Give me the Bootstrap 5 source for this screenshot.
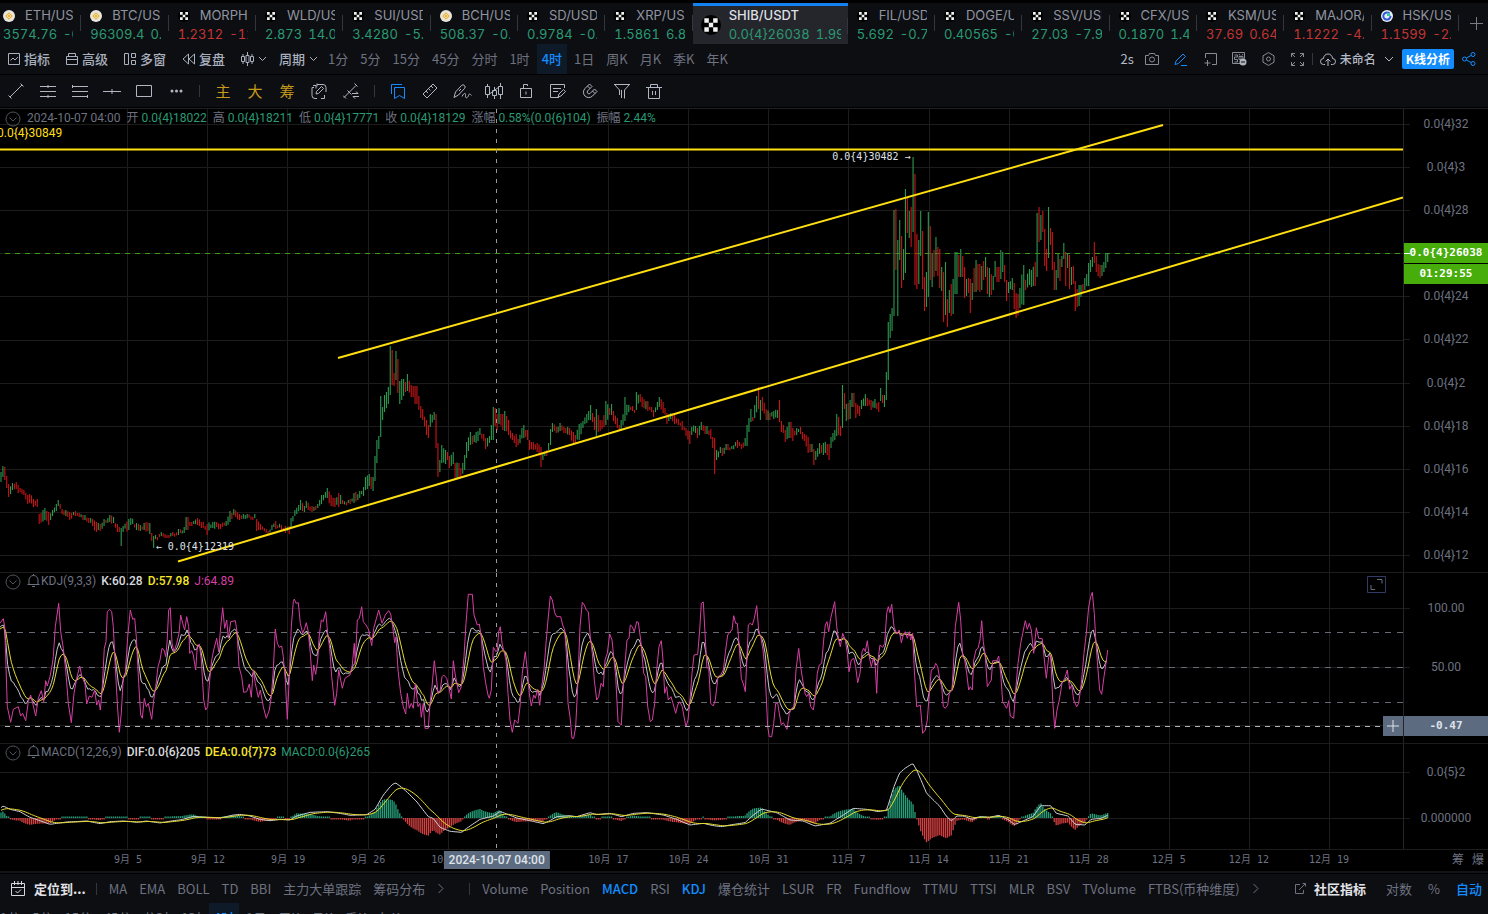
<!DOCTYPE html>
<html lang="zh-CN" data-bs-theme="dark">
<head>
<meta charset="utf-8">
<meta name="viewport" content="width=device-width, initial-scale=1">
<title>SHIB/USDT K线</title>
<link href="https://cdn.jsdelivr.net/npm/bootstrap@5.3.0/dist/css/bootstrap.min.css" rel="stylesheet">
<style>
  :root { --bar: #0d0e11; --up: #2a9a74; --down: #c23535; --dim: #6d7281; --soft: #b4bac6; --accent: #128cff; --grid: #1c1c1c; }
  body { background: var(--bar); color: var(--soft); font: 13px/20px "Noto Sans CJK SC", sans-serif; border-top: 3px solid #000; }
  button { background: none; border: 0; padding: 0; color: inherit; font: inherit; white-space: nowrap; }
  a { color: inherit; text-decoration: none; white-space: nowrap; }
  svg { display: block; flex: none; }
  .ico { fill: none; stroke: currentColor; stroke-width: 1; }
  .tickers { height: 41px; min-width: 0; font-family: Inter, sans-serif; font-variant-numeric: tabular-nums; margin-left: -6px; }
  .tick { flex: 1 1 0; min-width: 0; padding: 3px 8px 0 9px; position: relative; line-height: 19px; text-align: left; color: #8f94a0; }
  .tick::after { content: ""; position: absolute; right: 0; top: 12px; height: 16px; border-right: 1px solid #33363d; }
  .tick .clip { display: block; overflow: hidden; white-space: nowrap; }
  .tick .chg { margin-left: 6px; }
  .tick .logo { width: 12px; height: 12px; margin-right: 10px; }
  .tick.on { flex: 0 0 155px; background: #25262b; border-top: 3px solid #1283f0; padding: 0 7px 0 8px; color: #dcdfe5; }
  .up { color: var(--up); } .down { color: var(--down); }
  .addtab { width: 29px; padding-left: 6px; color: #777b86; }
  .tools { height: 30px; padding: 0 12px 0 8px; }
  .per { color: var(--dim); padding: 0 6px; line-height: 30px; }
  .per.on { color: var(--accent); background: #0e1a28; font-weight: 500; padding: 0 5px; margin: 0 1px; }
  .menu { font-weight: 500; color: #a9b0be; margin-right: 16px; gap: 4px; }
  .icob { width: 29px; color: #868b97; display: flex; justify-content: center; }
  .draw { height: 34px; border-top: 1px solid #000; border-bottom: 1px solid #000; }
  .draw button { width: 32px; display: flex; justify-content: center; color: #b0b6c2; }
  .draw .zh { color: #c79a1c; font-size: 15px; }
  .sep { width: 1px; height: 12px; background: #33363d; margin: 0 7px; flex: none; }
  .analyze { background: var(--accent); color: #fff; font-weight: 700; font-size: 12px; border-radius: 2px; padding: 0 4px; }
  .board { background: #000; border-top: 1px solid #202124; font-family: Roboto, "Noto Sans CJK SC", sans-serif; font-size: 12px; }
  .pane { border-bottom: 1px solid var(--grid); }
  .plot { flex: 1 1 0; min-width: 0; position: relative; overflow: hidden; }
  .plot > svg { width: 100%; }
  .chart-price { height: 463px; } .chart-kdj { height: 170px; } .chart-macd { height: 105px; }
  .scale { width: 85px; border-left: 1px solid #26262a; color: var(--dim); position: relative; text-align: center; flex: none; }
  .scale.prices { padding: 5px 0 7px; }
  .scale span { line-height: 20px; height: 20px; position: relative; display: block; }
  .scale span::before { content: ""; position: absolute; left: 0; top: 10px; width: 6px; border-top: 1px solid var(--grid); }
  .scale .at { position: absolute; left: 0; right: 0; margin-top: -10px; }
  .scale .flag, .scale .slate { font: bold 11px/20px "DejaVu Sans Mono", monospace; }
  .flag { background: #46ad0b; color: #fff; }
  .scale .flag::before { border-color: #fff; }
  .flag .left-time { position: absolute; left: 0; right: 0; top: 21px; height: 20px; background: #46ad0b; }
  .slate { background: #5c6b7f; color: #dfe3ea; }
  .scale .slate::before { display: none; }
  .plus { position: absolute; right: 0; width: 20px; height: 20px; margin-top: -10px; }
  .legend { position: absolute; left: 5px; top: 0; line-height: 18px; color: var(--dim); white-space: nowrap; }
  .legend.sub { top: -1px; column-gap: 5px; }
  .legend b { font-weight: 500; }
  .lbl { position: absolute; font: 10px/12px "DejaVu Sans Mono", monospace; color: #dfe2e8; margin-top: -6px; }
  .dates { font: 10px/20px "DejaVu Sans Mono", "Noto Sans CJK SC", monospace; color: var(--dim); height: 23px; border-bottom: 2px solid #131417; }
  .dates .days { padding: 0 34px 0 88px; }
  .cursor-day { position: absolute; top: 1px; transform: translateX(-50%); font: 500 12px/18px Roboto, sans-serif; padding: 0 5px; white-space: nowrap; }
  .foot { height: 30px; border-top: 1px solid #000; color: var(--dim); padding: 0 6px 0 11px; }
  .foot a { margin-right: 12px; }
  .foot a.on { color: var(--accent); font-weight: 500; }
  .foot strong { color: #e2e4e9; }
  .foot .sep { margin: 0 12px 0 10px; }
</style>
</head>
<body class="d-flex flex-column vh-100 overflow-hidden">

<nav class="d-flex flex-shrink-0">
  <div id="tickers" class="tickers d-flex flex-grow-1"></div>
  <button class="addtab flex-shrink-0 d-flex align-items-center justify-content-center" aria-label="添加"><svg class="ico" width="13" height="13"><path d="M6.500 0v13M0 6.500h13"/></svg></button>
</nav>

<div class="tools d-flex align-items-center flex-shrink-0">
  <button class="menu d-flex align-items-center"><svg class="ico" width="12" height="12"><path d="M.5.5h11v11H.5zM2.500 7.500 5 5l2 2 3-3"/></svg>指标</button>
  <button class="menu d-flex align-items-center"><svg class="ico" width="12" height="12"><path d="M.5 3.500h11v8H.5zM.5 6.500h11M2.500 3V.5h7V3"/></svg>高级</button>
  <button class="menu d-flex align-items-center"><svg class="ico" width="12" height="12"><path d="M.5.5h4v11h-4zM7.500.5h4v4h-4zM7.500 7.500h4v4h-4z"/></svg>多窗</button>
  <button class="menu d-flex align-items-center"><svg class="ico" width="13" height="12"><path d="M6.500 1v10L1 6zM12.500 1v10L7 6z"/></svg>复盘</button>
  <button class="menu d-flex align-items-center me-2" aria-label="图表类型"><svg class="ico" width="13" height="14"><path d="M2 2v10M6.500 0v14M11 2v10"/><path fill="#0d0e11" d="M.5 4.500h3v5h-3zM5 3.500h3v7H5zM9.500 4.500h3v5h-3z"/></svg><svg class="ico" width="9" height="6"><path d="m1 1 3.500 3.500L8 1"/></svg></button>
  <button class="menu d-flex align-items-center me-1 ps-1">周期<svg class="ico" width="9" height="6"><path d="m1 1 3.500 3.500L8 1"/></svg></button>
  <div class="d-flex">
    <button class="per">1分</button><button class="per">5分</button><button class="per">15分</button><button class="per">45分</button><button class="per">分时</button><button class="per">1时</button><button class="per on">4时</button><button class="per">1日</button><button class="per">周K</button><button class="per">月K</button><button class="per">季K</button><button class="per">年K</button>
  </div>
  <div class="d-flex align-items-center ms-auto">
    <button class="me-1">2s</button>
    <button class="icob" aria-label="截图"><svg class="ico" width="14" height="12"><path d="M.5 2.500h3l1-2h5l1 2h3v9H.5z"/><circle cx="7" cy="6.500" r="2.500"/></svg></button>
    <button class="icob" aria-label="画图" style="color:#128cff"><svg class="ico" width="14" height="13"><path d="m2 8 7-7 2.500 2.500-7 7L1 11.500zM7 12.500h6"/></svg></button>
    <button class="icob" aria-label="新窗口"><svg class="ico" width="13" height="13"><path d="M1.500 5V.5h11v11H8M3.500 7v6M.5 10h6"/></svg></button>
    <button class="icob" aria-label="弹幕"><svg class="ico" width="15" height="14"><path d="M8 11.500H.5V.5h12v6M2.500 3h3v2h-3v2.500h3V10h-3M7 2l1 1.500M11 2l-1 1.500M7 4.500h4v3H7zM9 4v6"/><circle cx="11" cy="10" r="3.500" fill="#aeb3be" stroke="none"/><path stroke="#0d0e11" d="M9 10h4"/></svg></button>
    <button class="icob" aria-label="设置"><svg class="ico" width="13" height="14"><path d="m6.500.6 5.500 3.200v6.400l-5.500 3.200L1 10.200V3.800z"/><circle cx="6.500" cy="7" r="2"/></svg></button>
    <button class="icob" aria-label="全屏"><svg class="ico" width="13" height="13"><path d="M.5 4V.5H4M.5.5 4 4M9 .5h3.500V4M12.500.5 9 4M.5 9v3.500H4M.5 12.500 4 9M12.500 9v3.500H9M12.500 12.500 9 9"/></svg></button>
    <span class="sep ms-0"></span>
    <button class="d-flex align-items-center gap-1 fw-medium" style="font-size:12px"><svg class="ico" width="16" height="13"><path d="M5 11.500H3.500a3 3 0 0 1 0-6 4.500 4.500 0 0 1 9 0 3 3 0 0 1 0 6H11M8 13V6M5.500 8.500 8 6l2.500 2.500"/></svg>未命名<svg class="ico ms-1" width="10" height="6"><path d="m1 1 4 4 4-4"/></svg></button>
    <button class="analyze ms-2 me-2">K线分析</button>
    <button aria-label="分享" style="color:#128cff"><svg class="ico" width="14" height="14"><circle cx="2.500" cy="7" r="2"/><circle cx="11" cy="2.500" r="2"/><circle cx="11" cy="11.500" r="2"/><path d="m4.300 6 5-2.600M4.300 8l5 2.600"/></svg></button>
  </div>
</div>

<div class="draw d-flex align-items-center flex-shrink-0">
  <button aria-label="线段"><svg class="ico" width="16" height="16"><path d="m2 14 12-12M.5 12.500l3 3M12.500.5l3 3"/></svg></button>
  <button aria-label="平行线"><svg class="ico" width="16" height="14"><path d="M0 2.500h16M0 7.500h16M0 12.500h16M8 1v3M8 11v3"/></svg></button>
  <button aria-label="通道"><svg class="ico" width="16" height="14"><path d="M0 2.500h16M0 7.500h16M0 12.500h16M.5 1v3M15.500 11v3"/></svg></button>
  <button aria-label="水平线"><svg class="ico" width="18" height="8"><path d="M0 4.500h18M9 2v5"/></svg></button>
  <button aria-label="矩形"><svg class="ico" width="16" height="12"><path d="M.5.5h15v11H.5z"/></svg></button>
  <button aria-label="更多"><svg width="13" height="4" fill="currentColor"><circle cx="2" cy="2" r="1.500"/><circle cx="6.500" cy="2" r="1.500"/><circle cx="11" cy="2" r="1.500"/></svg></button>
  <span class="sep"></span>
  <button class="zh">主</button><button class="zh">大</button><button class="zh">筹</button>
  <button aria-label="替换"><svg class="ico" width="16" height="17"><path d="M6 15.500H4a3 3 0 0 1-3-3V4.500h2M2 2.500h3v3M6 1.500h6a3 3 0 0 1 3 3V9M10 15.500h3.500V12M6 .5v3M5 11l.5-2.500 5-5 2 2-5 5z"/></svg></button>
  <button aria-label="线条切换"><svg class="ico" width="16" height="16"><path d="m1 14.500 12-12M11.500.5l3 3M0 12.500l3 3M4.500 7.500l4 4M9 10.500h6l-2-2M16 13.500h-6l2 2"/></svg></button>
  <span class="sep"></span>
  <button aria-label="书签"><svg class="ico" width="16" height="16" style="color:#128cff"><path d="M1.500 11V1.500H12M4.500 4.500h10v11l-5-3-5 3z"/></svg></button>
  <button aria-label="尺子"><svg class="ico" width="16" height="16"><path d="m1 11 10-10 4 4L5 15zM4 8l2 2M6.500 5.500l2 2M9 3l2 2"/></svg></button>
  <button aria-label="画笔"><svg class="ico" width="19" height="15"><path d="m1 13.500 1.500-5.500 6-6.500a2 2 0 0 1 3 3l-6 6.500zM6 7l2-2M9 12.500c2-4 4-4 3.500-1s2 3 3 0 2-1 3 0"/></svg></button>
  <button aria-label="形态"><svg class="ico" width="18" height="17"><path d="M2.500 1v2M2.500 12v3M9.500 4v3M9.500 12v4M15.500 0v3M15.500 12v4M.5 3.500h4v8h-4zM7.500 7.500h4v5h-4zM13.500 3.500h4v8h-4zM3 12l11-8"/></svg></button>
  <button aria-label="锁"><svg class="ico" width="12" height="15"><path d="M.5 4.500h11v9H.5zM3.500 4.500v-4h4V2M6 7.500v3"/></svg></button>
  <button aria-label="备注"><svg class="ico" width="16" height="15"><path d="M9 13.500H.5V.5h14V4M3 4.500h8M3 7.500h5M8 13l1-3 4.500-4.500 2 2L11 12z"/></svg></button>
  <button aria-label="磁铁"><svg class="ico" width="16" height="16"><path d="M7.500 1 3 5.500a5.300 5.300 0 0 0 7.500 7.500L15 8.500 12.500 6 8 10.500a1.800 1.800 0 0 1-2.500-2.500L10 3.500zM5.500 3 8 5.500M10.500 8l2.500 2.500"/></svg></button>
  <button aria-label="筛选"><svg class="ico" width="16" height="15"><path d="M.5.500h15L10.500 6v8.500M5.500 11V6L.5.500M0 .5h16M7.500 6v8"/></svg></button>
  <button aria-label="删除"><svg class="ico" width="16" height="15"><path d="M0 3.500h16M4.500 3.500v-3h7v3M2.500 3.500v11h11v-11M6.500 7v4M9.500 7v4"/></svg></button>
</div>

<main class="board flex-shrink-0">
  <section class="pane d-flex">
    <div class="plot">
      <svg class="chart-price" id="price" viewBox="0 109 1403 463" preserveAspectRatio="none"></svg>
      <div class="legend d-flex align-items-center" style="column-gap:6px">
        <svg class="ico" width="16" height="17" style="color:#50535c"><circle cx="8" cy="9" r="7"/><path d="m4.500 7.500 3.500 3.500 3.500-3.500"/></svg>
        <span>2024-10-07 04:00</span><span>开 <span class="up">0.0{4}18022</span></span><span>高 <span class="up">0.0{4}18211</span></span><span>低 <span class="up">0.0{4}17771</span></span><span>收 <span class="up">0.0{4}18129</span></span><span>涨幅 <span class="up">0.58%(0.0{6}104)</span></span><span>振幅 <span class="up">2.44%</span></span>
      </div>
      <div class="legend" style="left:-3px;top:15px;color:#ffdf10">0.0{4}30849</div>
      <div class="lbl" style="right:35.1%;top:10.4%">0.0{4}30482 →</div>
      <div class="lbl" style="left:11.1%;top:94.6%">← 0.0{4}12319</div>
    </div>
    <div class="scale prices d-flex flex-column justify-content-between">
      <span>0.0{4}32</span><span>0.0{4}3</span><span>0.0{4}28</span>
      <span class="flag">0.0{4}26038<i class="left-time fst-normal">01:29:55</i></span>
      <span>0.0{4}24</span><span>0.0{4}22</span><span>0.0{4}2</span><span>0.0{4}18</span><span>0.0{4}16</span><span>0.0{4}14</span><span>0.0{4}12</span>
    </div>
  </section>

  <section class="pane d-flex">
    <div class="plot">
      <svg class="chart-kdj" id="kdj" viewBox="0 573 1403 170" preserveAspectRatio="none"></svg>
      <div class="legend sub d-flex align-items-center">
        <svg class="ico" width="17" height="17" style="color:#50535c"><circle cx="8" cy="9" r="7"/><path d="m4.500 7.500 3.500 3.500 3.500-3.500"/></svg>
        <span class="d-flex align-items-center"><svg class="ico" width="14" height="14"><path d="M.5 10.500h12M2 10.500V6a4.500 4.500 0 0 1 9 0v4.500M5 12.500h3M6.500 0v1.500"/></svg>KDJ(9,3,3)</span><b style="color:#d8dade">K:60.28</b><b style="color:#f5e72a">D:57.98</b><span style="color:#d63fa4">J:64.89</span>
      </div>
      <svg class="position-absolute" style="right:16px;top:3px;width:20px" width="20" height="18" fill="none" stroke="#343a66"><path d="M.5.5h18v16H.5z"/><path stroke="#6a6d78" d="M10 3.500h5v4M4 9v4.500h4"/></svg>
      <button class="plus slate d-flex align-items-center justify-content-center" style="top:90%" aria-label="添加警报"><svg class="ico" width="12" height="12"><path d="M6 0v12M0 6h12"/></svg></button>
    </div>
    <div class="scale"><span class="at" style="top:20.6%">100.00</span><span class="at" style="top:55.3%">50.00</span><span class="at slate" style="top:90%">-0.47</span></div>
  </section>

  <section class="pane d-flex">
    <div class="plot">
      <svg class="chart-macd" id="macd" viewBox="0 744 1403 105" preserveAspectRatio="none"></svg>
      <div class="legend sub d-flex align-items-center">
        <svg class="ico" width="17" height="17" style="color:#50535c"><circle cx="8" cy="9" r="7"/><path d="m4.500 7.500 3.500 3.500 3.500-3.500"/></svg>
        <span class="d-flex align-items-center"><svg class="ico" width="14" height="14"><path d="M.5 10.500h12M2 10.500V6a4.500 4.500 0 0 1 9 0v4.500M5 12.500h3M6.500 0v1.500"/></svg>MACD(12,26,9)</span><b style="color:#d8dade">DIF:0.0{6}205</b><b style="color:#f5e72a">DEA:0.0{7}73</b><span class="up">MACD:0.0{6}265</span>
      </div>
    </div>
    <div class="scale"><span class="at" style="top:26.7%">0.0{5}2</span><span class="at" style="top:70.5%">0.000000</span></div>
  </section>

  <div class="dates d-flex">
    <div class="flex-grow-1 position-relative">
      <div id="days" class="days d-flex text-center"></div>
      <div class="cursor-day slate" style="left:35.4%">2024-10-07 04:00</div>
    </div>
    <div style="width:85px;font-size:12px" class="text-end pe-1 flex-shrink-0"><span class="me-2">筹</span>爆</div>
  </div>
</main>

<div class="foot d-flex align-items-center flex-shrink-0">
  <button class="d-flex align-items-center gap-2"><svg class="ico" width="15" height="16" style="color:#d5d8de"><path d="M.5 2.500h13v12H.5zM.5 6.500h13M3.500 0v4M7 0v4M10.500 0v4M4.500 10l2 2 3.500-3.500"/></svg><strong>定位到...</strong></button>
  <span class="sep"></span>
  <a href="#">MA</a><a href="#">EMA</a><a href="#">BOLL</a><a href="#">TD</a><a href="#">BBI</a><a href="#">主力大单跟踪</a><a href="#">筹码分布</a>
  <button aria-label="更多主图指标"><svg class="ico" width="8" height="11"><path d="m1.500 1 4.500 4.500L1.500 10"/></svg></button>
  <span class="sep ms-4"></span>
  <a href="#">Volume</a><a href="#">Position</a><a href="#" class="on">MACD</a><a href="#">RSI</a><a href="#" class="on">KDJ</a><a href="#">爆仓统计</a><a href="#">LSUR</a><a href="#">FR</a><a href="#">Fundflow</a><a href="#">TTMU</a><a href="#">TTSI</a><a href="#">MLR</a><a href="#">BSV</a><a href="#">TVolume</a><a href="#">FTBS(币种维度)</a>
  <button aria-label="更多副图指标"><svg class="ico" width="8" height="11"><path d="m1.500 1 4.500 4.500L1.500 10"/></svg></button>
  <button class="d-flex align-items-center gap-2 ms-auto"><svg class="ico" width="12" height="12"><path d="M6 1.500H1.500v9h8V7M5 7l6-6M8.500.5h3v3"/></svg><strong>社区指标</strong></button>
  <button class="ms-3 ps-1">对数</button><button class="ms-3">%</button><button class="ms-3 fw-medium" style="color:#128cff">自动</button>
</div>
<div class="tools d-flex flex-shrink-0 p-0" style="margin-left:-6px">
  <button class="per">1分</button><button class="per">5分</button><button class="per">15分</button><button class="per">45分</button><button class="per">分时</button><button class="per">1时</button><button class="per on">4时</button><button class="per">1日</button><button class="per">周K</button><button class="per">月K</button><button class="per">季K</button><button class="per">年K</button>
</div>

<script src="https://cdn.jsdelivr.net/npm/bootstrap@5.3.0/dist/js/bootstrap.bundle.min.js"></script>
<script>
// ---- ticker tabs: name, price, change, colour, logo ----
const tabs = [
  ['ETH/USDT','3574.76','-0.52','up','bnb'],['BTC/USDT','96309.4','0.41','up','bnb'],['MORPHO/USDT','1.2312','-12.1','down','okx'],
  ['WLD/USDT','2.873','14.05','up','okx'],['SUI/USDT','3.4280','-5.21','up','okx'],['BCH/USDT','508.37','-0.21','up','bnb'],
  ['SD/USDT','0.9784','-0.41','up','okx'],['XRP/USDT','1.5861','6.82','up','okx'],['SHIB/USDT','0.0{4}26038','1.99','up','okx'],
  ['FIL/USDT','5.692','-0.78','up','okx'],['DOGE/USDT','0.40565','-0.21','up','okx'],['SSV/USDT','27.03','-7.90','up','okx'],
  ['CFX/USDT','0.1870','1.41','up','okx'],['KSM/USDT','37.69','0.641','down','okx'],['MAJOR/USDT','1.1222','-4.11','down','okx'],['HSK/USDT','1.1599','-2.61','down','hsk']];
const logos = {
  bnb: s => `<svg class="logo" width="${s}" height="${s}" viewBox="0 0 12 12"><circle cx="6" cy="6" r="6" fill="#e9e6df"/><path d="M6 2.200 9.800 6 6 9.800 2.200 6z" fill="#eeb32b"/><path d="M6 4 8 6 6 8 4 6z" fill="none" stroke="#e9e6df" stroke-width=".8"/></svg>`,
  okx: s => `<svg class="logo" width="${s}" height="${s}" viewBox="0 0 12 12"><circle cx="6" cy="6" r="6" fill="#000"/><path fill="#f2f2f2" d="M2 2h2.700v2.700H2zM7.300 2H10v2.700H7.300zM4.700 4.700h2.600v2.600H4.700zM2 7.300h2.700V10H2zM7.300 7.300H10V10H7.300z"/></svg>`,
  hsk: s => `<svg class="logo" width="${s}" height="${s}" viewBox="0 0 12 12"><circle cx="6" cy="6" r="6" fill="#e9eefb"/><path d="M8.500 3.500A3.600 3.600 0 1 0 9.500 6" fill="none" stroke="#2f55d8" stroke-width="2"/><path d="M6 2.500A3.500 3.500 0 0 1 9.500 6H6z" fill="#39c6a8"/></svg>` };
const quote = (p, c, k) => `<span class="clip ${k}">${p}<span class="chg">${c}</span></span>`;
document.getElementById('tickers').innerHTML = tabs.map(([n, p, c, k, l]) => n === 'SHIB/USDT'
  ? `<button class="tick on d-flex align-items-center">${logos[l](20).replace('class="logo"', 'class="me-2"')}<span class="clip"><span class="clip fw-medium">${n}</span>${quote(p, c, k)}</span></button>`
  : `<button class="tick"><span class="clip"><span class="d-flex align-items-center">${logos[l](12)}${n}</span></span>${quote(p, c, k)}</button>`).join('');

document.getElementById('days').innerHTML = ['9月 5','9月 12','9月 19','9月 26','10月 3','10月 10','10月 17','10月 24','10月 31','11月 7','11月 14','11月 21','11月 28','12月 5','12月 12','12月 19']
  .map(d => `<span class="text-nowrap" style="flex:1 1 0">${d}</span>`).join('');

// ---- shared helpers ----
const STEP = 80.14 / 42;             // width of one 4h bar
const COUNT = 581;
const W = 1403;
const line = (x1, y1, x2, y2, c, more = '') => `<line x1="${x1}" y1="${y1}" x2="${x2}" y2="${y2}" stroke="${c}" ${more}/>`;
const grid = (top, bottom, ys) => {
  let s = '';
  for (let i = 0; i < 16; i++) { const x = Math.floor(127.6 + i * 80.14) + .5; s += line(x, top, x, bottom, '#1c1c1c'); }
  ys.forEach(y => s += line(0, y + .5, W, y + .5, '#1c1c1c'));
  return s;
};
const crosshair = (top, bottom) => line(496.5, top, 496.5, bottom, '#999', 'stroke-dasharray="4 6"');
const at = (pts, x, k) => {
  let i = 1;
  while (i < pts.length - 1 && pts[i][0] < x) i++;
  const a = pts[i - 1], b = pts[i], t = Math.max(0, Math.min(1, (x - a[0]) / (b[0] - a[0] || 1)));
  return a[k] + (b[k] - a[k]) * t;
};

// ---- price bars: x, high, low, optional colour ----
const bars = `0 472 482;3 466 477 g;5 467 480 r;7 476 488 r;9 484 497 r;13 483 490;16 482 489;19 485 493;23 490 495;27 495 504;30 494 503;34 499 507;38 499 507;40 514 524 r;44 508 520;48 512 525;52 510 516;56 504 511;59 500 506;62 509 514;66 510 516;70 512 520;75 511 516;80 513 517;84 515 520;88 518 523;92 519 526;96 522 532 r;100 524 531;104 519 526;109 515 522;113 517 523;117 524 532;119 527 532;121 528 546 g;123 526 532;128 519 530;131 518 525;136 523 530;141 525 531;145 523 530;149 523 534;152 533 541;154 536 548 g;156 535 539;162 532 536;166 534 538;172 532 536;178 529 535;184 527 533;187 517 530;191 522 526;198 518 525;202 522 528;207 524 535;213 522 528;220 524 529;226 521 526;230 511 522;234 509 515;239 514 520;246 515 519;254 514 518;257 519 531 r;261 524 530;267 529 533;272 525 530;276 521 529;281 525 530;286 526 533;289 526 534;291 518 528;295 510 516;300 500 510;304 506 512;307 501 508;312 506 512;317 504 508;321 495 504;327 488 498;331 495 506;335 498 507;339 493 507;343 500 504;350 499 504;354 493 503;359 491 498;363 487 496;366 477 490 g;369 474 486 g;373 477 491 g;375 456 481 g;377 440 463 g;379 436 449 g;381 396 437 g;383 407 420 g;385 395 412 g;388 387 404 g;390 346 395 g;392 350 385 r;394 373 386 r;396 351 380 g;398 359 393 r;400 381 404 g;403 379 396;406 382 392;408 374 391 g;411 385 397;414 386 397;416 386 404;418 396 410 r;420 406 418 r;423 409 420;426 420 435 r;429 425 438;431 414 427;434 412 420;436 414 448 r;438 443 477 r;440 460 472 g;442 445 463 g;445 450 464;448 452 460 r;450 456 468;453 452 464;456 463 478 r;459 463 479 r;461 468 477;464 455 470 g;467 442 458 g;470 432 445 g;474 435 442;477 432 443;480 428 435;483 434 441;486 438 449;490 436 443;493 407 440 g;495 408 426 r;497 414 430;499 408 424 g;502 414 430;505 411 431;508 420 435 r;512 433 440;516 434 447 r;519 439 445;523 425 438 g;527 430 440;530 440 450;534 442 450;538 443 452;541 447 467 r;543 454 460;546 450 456;549 443 450 g;551 429 445 g;553 423 432;557 427 433;560 423 431;564 427 433;570 428 435;573 432 445;576 435 443;579 424 440 g;583 421 428;587 414 423;590 405 420;592 413 422;595 417 430 r;597 409 436 g;600 420 431;604 415 427 r;606 401 425 g;609 408 415;612 404 415;614 411 421;617 418 428 r;620 425 431;622 420 430;625 397 421 g;628 405 412;632 406 411;635 410 412;637 392 410 g;640 394 402 r;643 397 407;647 401 411;651 407 412;654 410 417;657 402 410;660 397 407;664 402 413 r;667 413 424;671 413 419;674 415 424;678 419 425;682 421 430 r;686 428 436 r;689 431 444 r;692 427 435;695 426 433;698 428 438;702 422 430 g;706 426 434;710 429 439 r;712.5 437 448 r;714.5 438 474 r;717 450 460 g;720 447 453;723 448 456;727 444 450;731 446 449;737 440 448;741 444 449;745 438 446;747 425 446 g;749 418 432 g;751 409 422;753 417 421;755 405 418 g;758 387 409 r;760 400 420 g;763 397 411 r;766 409 420 r;770 413 420;773 411 419 g;777 410 418;779 400 422 r;782 421 432 r;786 430 442;790 422 438;793 428 441;796 428 435;800 427 434;804 434 441;808 437 453 r;811 444 452;813 449 465 r;816 451 460 g;819 443 454;823 443 455;826 442 453;829 444 460 r;831 437 448 g;834 430 440 g;836 414 436 g;838 417 435 r;840 426 436;842 385 428 g;844 393 409 r;847 404 421 g;850 400 419 g;853 393 407;856 403 418 r;859 406 416;862 400 409 g;865 394 406;868 398 406;871 400 410 r;875 399 408;878 402 412;880 388 401 g;883 395 403 r;885 395 407 g;887 372 400 g;888 322 380 g;890 314 338 g;892 308 331 g;894 210 316 g;896 209 270 r;898 240 316 g;900 220 260 g;902 236 288 r;904 249 280 g;906 189 273 g;908 198 233 r;909.5 211 238 g;911 207 247 r;913 157 232 g;915 174 285 r;917 234 289 r;919 240 284 g;921 211 256 g;923 231 289 r;925 277 311 r;927 272 307 g;929 212 297 g;931 226 280 r;933 253 287 g;935 250 277 r;936.5 237 271 g;938 247 276 r;940 249 288 r;942 267 291 g;944 272 322 r;946 262 315 g;948 299 327 r;950 290 313 g;952 284 316 r;954 279 314 g;956 252 294 g;958 255 277 r;960 249 277 g;962 256 277 r;964 267 298 r;966 279 296 g;968 278 293 r;970 279 313 r;972 283 300 g;974 268 292 r;976 260 292 g;978 264 290 r;980 264 292 r;982 266 290 g;984 261 280 r;986 257 277 g;988 267 294 r;990 268 297 g;993 276 290 g;996 261 277 g;998 267 282 r;1000 250 279 g;1002 252 272 g;1004 265 282 r;1006 280 301 r;1009 282 293;1012 278 290 g;1014 283 309 r;1017 293 318 r;1020 288 308 g;1023 265 305 g;1025 280 290 r;1029 269 285;1032 270 287 g;1035 262 286 r;1036.7 213 277 g;1038.7 207 242 r;1040.7 215 240 g;1042.7 211 232 r;1044.7 229 266 r;1046.3 249 271 r;1048.3 207 258 g;1050.3 228 245 r;1052.3 232 270 r;1054 262 290 r;1056 270 290 g;1058 254 278 g;1060 259 281 r;1062 256 267 g;1064 243 259 g;1066 252 286 r;1067.5 253 268 g;1069 255 289 r;1071 267 285 g;1073 266 284 r;1075 281 311 r;1077 289 307 r;1078.5 285 306 g;1080 285 297 g;1082 284 292 r;1084 278 290 g;1087 274 286 g;1089 263 286 g;1091 260 272 g;1092.5 257 267 g;1094 242 263 r;1096 256 272 r;1098 264 276 r;1100 265 278 r;1102 265 276 g;1104 262 272 g;1106 253 268 g;1108 253 262 g`
  .split(';').map(r => { const p = r.split(' '); return [+p[0], +p[1], +p[2], p[3]]; });

let s = grid(109, 572, [124, 167, 210, 253, 296, 340, 383, 426, 469, 512, 555]);
s += line(5, 253.5, W, 253.5, '#3f9a12', 'stroke-dasharray="5 5"');
let seed = 7, prev = 477;
const rnd = () => (seed = (seed * 16807) % 2147483647) / 2147483647;
for (let i = 0; i < COUNT; i++) {
  const x = 1 + i * STEP;
  if (x > 1109) break;
  const key = bars.reduce((b, q) => Math.abs(q[0] - x) < Math.abs(b[0] - x) ? q : b);
  let hi, lo, c;
  if (Math.abs(key[0] - x) <= 1) [, hi, lo, c] = key;
  else { hi = at(bars, x, 1) + rnd() * 4 - 1; lo = at(bars, x, 2) - rnd() * 4 + 1; }
  const mid = (hi + lo) / 2;
  if (!c) c = mid - prev + (rnd() - .5) * 4 > 0 ? 'r' : 'g';
  prev = mid;
  s += line(x.toFixed(2), hi.toFixed(1), x.toFixed(2), Math.max(lo, hi + 3).toFixed(1), c === 'g' ? '#2c9a50' : '#c81616', 'stroke-width="1.1"');
}
s += line(0, 149.5, W, 149.5, '#ffdf10', 'stroke-width="2"') + line(338, 358, 1163, 125, '#ffdf10', 'stroke-width="2"') + line(178, 561.5, W, 197.5, '#ffdf10', 'stroke-width="2"');
s += crosshair(109, 572);
document.getElementById('price').innerHTML = s;

// ---- indicator samples, stored in thirds of a pixel, origin y = 560 ----
const unpack = groups => groups.flatMap(([x0, str]) => str.split(' ').map(p => { const [x, y] = p.split(','); return [(+x + x0) / 3, 560 + y / 3]; }));
const jLine = unpack([
 [0, '0,190 10,176 14,200 22,440 32,487 40,448 55,440 62,468 68,460 77,482 85,425 92,405 107,468 115,415 124,392 131,425 137,362 142,378 150,350 156,318 160,290 166,200 176,130 182,215 190,265 197,330 205,430 214,488 222,400 230,355 239,318 246,350 255,372 260,432 268,408 276,412 284,390 290,435 296,420 301,450 306,395 313,265 318,245 322,155 329,148 335,155 340,200 346,320 352,430 358,517 364,460 370,350 376,340 383,230 391,150 398,178 404,175 409,230 416,370 422,465 427,475 433,415 439,440 445,430 455,478 461,420 467,380 474,320 480,300 486,265 492,270 497,290 501,250 506,150 511,143 516,250 522,275 530,250 537,220 542,165 548,190 554,210 560,170 566,200 569,280 575,272 580,285 587,330 592,260 598,252 604,300 611,420 617,450 623,440 629,360 635,300 641,270 650,235 656,275 662,200 668,143 674,205 680,180 685,235 692,185 706,182 711,215 717,320 725,350 731,397 740,395 748,372 754,412 760,330 766,370 775,412 781,390 790,440 799,475 808,450 814,410 820,330 826,207 832,250 838,262 845,258 850,290 856,360 862,478 868,350 874,200 880,125 883,117 888,130 895,128 901,190 908,220 914,205 919,188 925,215 931,280 937,362 941,315 947,343 953,300 958,225 964,180 970,185 977,155 983,220 989,265 995,350 1004,436 1010,400 1016,330 1027,385 1035,355 1050,345 1057,315 1063,250 1066,310 1072,180 1078,175 1085,140 1090,185 1098,195 1106,210 1115,257 1121,205 1128,180 1136,150 1146,190 1156,165 1166,152 1172,162 1178,200 1184,248 1188,230 1194,330 1202,400 1210,440 1217,462 1222,400 1228,445 1234,430 1240,445 1246,372 1254,440 1260,430 1264,472 1270,430 1275,505 1285,505 1290,430 1296,380 1303,302 1309,350 1314,400 1320,395 1326,350 1331,345 1340,355 1347,385 1354,417 1360,302 1366,345 1376,398 1384,380 1392,290 1398,190 1405,103 1417,103 1422,165 1432,195 1438,192 1444,230 1450,320 1457,370 1464,405 1468,415 1474,390'],
 [1470, '10,262 18,275 22,270 26,215 31,200 36,250 42,275 48,300 54,400 60,480 67,517 74,480 84,490 90,440 97,340 106,275 112,330 118,400 124,438 131,405 136,415 143,388 149,436 155,380 162,330 168,250 174,180 181,108 187,120 194,158 200,170 212,170 218,195 224,210 229,280 234,430 240,470 246,535 251,535 257,500 263,380 270,200 277,127 283,135 289,150 295,155 301,230 307,280 313,360 320,420 326,410 333,370 340,380 345,300 352,280 359,222 366,240 371,290 377,350 384,485 394,495 400,380 405,310 411,240 417,235 421,195 427,200 433,215 440,185 445,187 452,240 461,340 467,350 473,440 481,485 487,480 494,430 500,330 507,260 514,242 519,300 524,400 530,380 535,420 543,410 549,430 557,460 563,435 569,425 577,440 582,470 588,500 594,480 600,420 606,340 612,285 623,283 629,210 634,130 640,126 645,220 651,325 656,320 662,430 670,438 676,420 684,350 692,345 700,330 707,270 713,225 720,215 726,210 731,167 737,190 742,190 748,260 754,355 761,375 766,395 771,290 775,195 781,190 787,195 793,175 800,137 806,210 813,235 819,270 825,330 833,500 838,530 845,530 851,490 857,430 863,430 868,460 874,495 880,488 891,508 898,460 905,445 912,440 918,330 926,265 932,320 938,360 945,400 950,410 956,400 962,440 970,450 977,400 982,340 988,315 995,310 1001,240 1006,195 1011,185 1016,215 1022,175 1034,125 1040,200 1046,240 1051,260 1058,220 1066,240 1072,280 1077,335 1084,300 1091,295 1097,320 1103,368 1110,340 1116,275 1121,265 1126,275 1132,242 1138,290 1144,320 1150,295 1156,320 1160,400 1164,300 1170,255 1178,262 1184,250 1190,160 1195,140 1200,158 1205,133 1212,200 1220,222 1228,210 1234,248 1240,225 1246,215 1252,235 1258,215 1262,240 1268,220 1273,330 1280,440 1291,435 1298,520 1306,510 1312,480 1318,400 1324,330 1332,325 1337,310 1343,320 1350,360 1355,380 1360,440 1366,445 1373,435 1378,400 1386,390 1391,300 1396,200 1406,127 1412,180 1418,290 1424,300 1430,340 1436,390 1441,380 1447,390 1451,300 1458,270 1464,265 1470,240 1475,182 1480,245 1486,290 1492,380 1498,370'],
 [2964, '10,360 14,302 26,302 32,288 38,340 44,425 56,445 62,422 67,468 77,475 83,390 90,310 98,250 104,220 112,182 118,208 124,190 130,210 137,280 145,203 152,235 163,236 168,290 175,355 182,290 188,285 194,420 200,505 207,450 214,420 222,370 230,355 238,330 245,388 251,375 257,420 266,440 272,430 280,370 288,280 295,220 302,140 308,110 313,97 319,160 324,250 330,330 335,390 341,403 348,350 354,310 359,270']]);
const poly = (p, c) => `<polyline fill="none" stroke="${c}" points="${p.map(q => q[0].toFixed(1) + ',' + q[1].toFixed(1)).join(' ')}"/>`;

s = grid(573, 743, [608, 667, 725]);
[632.5, 667.5, 702.5].forEach(y => s += line(5, y, W, y, '#666a72', 'stroke-dasharray="6 6"'));
// D follows from J, and K from both, since J = 3K - 2D
let d = 630; const K = [], D = [];
for (let x = 0; x <= 1107.6; x += STEP) { const j = at(jLine, x, 1); d = (6 * d + j) / 7; D.push([x, d]); K.push([x, (j + 2 * d) / 3]); }
s += poly(K, '#c4c6ca') + poly(D, '#e8dc2e') + poly(jLine, '#d63fa4');
s += line(5, 726.5, 1383, 726.5, '#b0b2b8', 'stroke-dasharray="5 5"') + crosshair(573, 743);
document.getElementById('kdj').innerHTML = s;

const dif = unpack([
 [0, '0,745 10,738 30,748 60,755 90,772 120,782 150,793 200,786 260,783 300,791 330,785 370,783 410,787 440,783 480,789 520,782 545,779 580,769 620,772 660,774 700,765 720,763 750,768 780,778 810,782 840,778 870,780 890,768 930,757 980,755 1020,760 1050,766 1100,764 1125,748 1150,705 1175,675 1186,668 1200,678 1220,695 1250,725 1285,770 1300,775 1320,802 1350,814 1385,817 1400,805 1440,778 1480,768'],
 [1470, '30,754 45,760 80,774 120,782 160,791 180,782 200,770 240,767 260,770 300,758 320,764 360,760 395,770 430,760 470,758 520,765 560,778 600,795 640,790 670,797 695,800 720,795 765,788 790,765 815,747 860,758 900,780 940,783 975,798 1020,790 1060,765 1090,745 1130,748 1165,755 1190,750 1210,685 1228,640 1245,625 1268,610 1280,630 1310,700 1350,740 1370,770 1385,783 1400,768 1420,768 1447,778 1470,770 1498,772'],
 [2964, '32,766 60,778 80,794 100,785 135,770 158,737 188,737 205,760 240,768 262,793 290,795 310,778 340,775 359,766']]);
s = grid(744, 849, [772, 818]);
let e = 811; const A = [], B = []; let hist = '';
for (let x = 1; x <= 1108; x += STEP) {
  const v = at(dif, x, 1); e += (v - e) * .2;
  A.push([x, v]); B.push([x, e]);
  let h = (e - v) * 2; if (Math.abs(h) < 1.5) h = h < 0 ? -1.5 : 1.5;
  hist += line(x.toFixed(2), 818, x.toFixed(2), (818 - h).toFixed(1), h > 0 ? '#25a07a' : '#d64040', 'stroke-width="1.3"');
}
s += hist + poly(A, '#cfd1d5') + poly(B, '#e8dc2e') + crosshair(744, 849);
document.getElementById('macd').innerHTML = s;
</script>
</body>
</html>
